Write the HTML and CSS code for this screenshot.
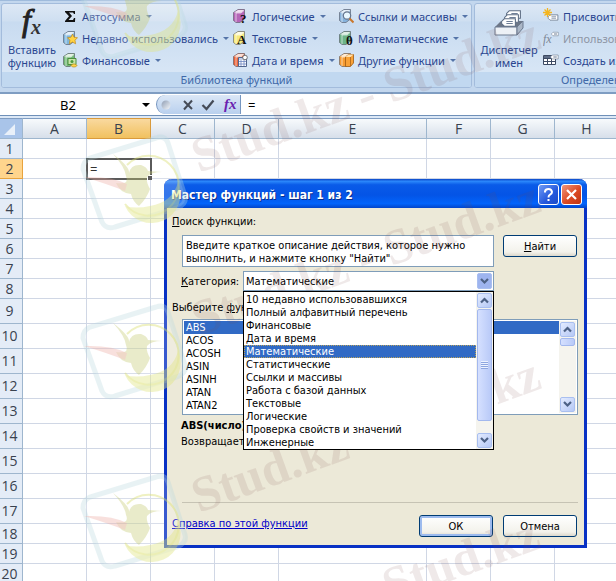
FILE: index.html
```
<!DOCTYPE html>
<html lang="ru">
<head>
<meta charset="utf-8">
<title>Мастер функций</title>
<link rel="stylesheet" href="styles.css">
</head>
<body>
<svg class="defs" aria-hidden="true">
  <defs>
    <linearGradient id="ball" x1="0" y1="0" x2="1" y2="1"><stop offset="0" stop-color="#8f9db3"/><stop offset="1" stop-color="#f4f7fb"/></linearGradient>
    <symbol id="book" viewBox="0 0 16 16">
      <path d="M1.5 4.5 6 1.5h6.5v9.500L8 14.500H4L1.500 12.500z" fill="currentColor" stroke="#4a4a55" stroke-opacity=".55"/>
      <path d="M2 4.500 6 2h6L9 4.700H4z" fill="#fff" fill-opacity=".8"/>
      <path d="M4 5v9M4 5h5l3-2.500" fill="none" stroke="#fff" stroke-opacity=".6"/>
    </symbol>
    <symbol id="tag" viewBox="0 0 16 10"><path d="M4 1.500h10.500v7H4L1.500 6V4z" fill="#fff" stroke="#5f6f85"/><path d="M6 4h6M6 6h6" stroke="#6f7f97"/></symbol>
    <symbol id="bird" viewBox="0 0 110 98">
      <path d="M10 24Q3 27 3 35L22 88Q26 96 35 93L97 74Q107 70 105 62L88 9Q85 1 76 4Z" fill="#fff" fill-opacity=".3" stroke="#b9d9df" stroke-opacity=".5" stroke-width="5"/>
      <path d="M47 31A30 30 0 1 1 45 70" fill="none" stroke="#dfe383" stroke-opacity=".75" stroke-width="2"/>
      <path d="M45 72A29 29 0 0 0 98 48Q93 68 70 72Q56 75 45 72Z" fill="#e2e785" fill-opacity=".65"/>
      <path d="M33 20Q50 33 49 39Q51 30 61 31Q67 33 68 37L82 38Q71 38 67 43Q66 48 70 55Q67 64 59 72Q53 68 51 60Q40 59 36 49Q50 51 46 42Q45 33 33 20Z" fill="#ccd184" fill-opacity=".65"/>
      <path d="M4 43Q32 42 47 50L45 57Q27 50 4 43Z" fill="#eeb1aa" fill-opacity=".6"/>
    </symbol>
  </defs>
</svg>

<main class="app">
<header class="ribbon">
  <section class="group group-lib">
    <div class="group-body">
      <button class="big"><svg width="32" height="32" viewBox="0 0 32 32"><text x="6" y="23" class="fx-big">f</text><text x="15" y="26" class="fx-big-x">x</text></svg><span>Вставить<br>функцию</span></button>
      <div class="stack stack-a">
        <button class="cmd"><svg class="ic" viewBox="0 0 16 16"><path d="M3 3h10v3h-1L11 4.500H7L10 8l-3.500 4H11l1-2h1.200L13 14H3v-1l4-4.700L3 4z" fill="#111"/></svg>Автосумма<i class="arr"></i></button>
        <button class="cmd"><svg class="ic c-blue" viewBox="0 0 16 16"><use href="#book"/><path d="m10.500 4 1.500 3.200 3.500.5-2.500 2.500.6 3.600-3.100-1.700-3.200 1.700.6-3.600L5.500 7.700 9 7.200z" fill="#ffd344" stroke="#c48a1a" stroke-width=".7"/></svg>Недавно использовались<i class="arr"></i></button>
        <button class="cmd"><svg class="ic c-green" viewBox="0 0 16 16"><use href="#book"/><path d="M6 6.500h8v6H6z" fill="#c7e5a9" stroke="#4b8f3e"/><circle cx="10" cy="9.500" r="1.500" fill="#4b9a3c"/><path d="M9 13.500c1-2 5-2 6 0-1 2-5 2-6 0z" fill="#ffd34c" stroke="#a98518" stroke-width=".6"/></svg>Финансовые<i class="arr"></i></button>
      </div>
      <div class="stack stack-b">
        <button class="cmd"><svg class="ic c-purple" viewBox="0 0 16 16"><use href="#book"/><text x="8" y="15" class="glyph">?</text></svg>Логические<i class="arr"></i></button>
        <button class="cmd"><svg class="ic c-yellow" viewBox="0 0 16 16"><use href="#book"/><text x="5" y="14" class="glyph">A</text></svg>Текстовые<i class="arr"></i></button>
        <button class="cmd"><svg class="ic c-red" viewBox="0 0 16 16"><use href="#book"/><path d="M6.500 5.500h8v9h-8z" fill="#fff" stroke="#50658f"/><path d="M7 7h7M7 9.500h7M7 12h7M9 8v6M12 8v6" stroke="#6d86c2" stroke-width=".8"/><circle cx="13" cy="5.500" r="2.300" fill="#fff" stroke="#555" stroke-width=".8"/></svg>Дата и время<i class="arr"></i></button>
      </div>
      <div class="stack">
        <button class="cmd"><svg class="ic c-sky" viewBox="0 0 16 16"><use href="#book"/><circle cx="9" cy="7.500" r="3.700" fill="#e8f7ff" stroke="#65758d" stroke-width="1.200"/><path d="m11.500 10.500 4 4" stroke="#c9772c" stroke-width="2"/></svg>Ссылки и массивы<i class="arr"></i></button>
        <button class="cmd"><svg class="ic c-teal" viewBox="0 0 16 16"><use href="#book"/><text x="8" y="15" class="glyph">θ</text></svg>Математические<i class="arr"></i></button>
        <button class="cmd"><svg class="ic c-orange" viewBox="0 0 16 16"><use href="#book"/><path d="m7.500 5 3-2.500h5v8.500l-3 3.500h-5z" fill="#f9a238" stroke="#9e5a12" stroke-width=".8"/><path d="m7.500 5 3-2.500h5L12.500 5z" fill="#ffe1ae"/><path d="M12.500 5v9" stroke="#a35a12" stroke-width=".7"/></svg>Другие функции<i class="arr"></i></button>
      </div>
    </div>
    <div class="group-name">Библиотека функций</div>
  </section>
  <section class="group group-names">
    <div class="group-body">
      <button class="big"><svg width="32" height="32" viewBox="0 0 32 32"><path d="M2 19 8 13h22l-6 6z" fill="#6d7787"/><path d="M2 19h22v8H2z" fill="#edf1f6" stroke="#6d7b90"/><path d="m24 19 6-6v7l-6 7z" fill="#aab6c6" stroke="#6d7b90"/><use href="#tag" x="12" y="1" width="17" height="11"/><use href="#tag" x="10" y="5" width="17" height="11"/><use href="#tag" x="7" y="9" width="17" height="11"/></svg><span>Диспетчер<br>имен</span></button>
      <div class="stack">
        <button class="cmd"><svg class="ic" viewBox="0 0 16 16"><use href="#tag" x="4" y="5" width="12" height="9"/><path d="M4.500 0v9M0 4.500h9M1.500 1.500l6 6M7.500 1.500l-6 6" stroke="#f4b51e" stroke-width="1.300"/></svg>Присвоить имя</button>
        <button class="cmd off"><svg class="ic" viewBox="0 0 16 16"><text x="0" y="13" class="fx-small">fx</text><use href="#tag" x="8" y="1" width="8" height="6"/></svg>Использовать в формуле</button>
        <button class="cmd"><svg class="ic" viewBox="0 0 16 16"><path d="M.5 3.500h12v9H.5zM.5 6.500h12M.5 9.500h12M4.500 3.500v9M8.500 3.500v9" fill="#fff" stroke="#3c4a63"/><path d="M1 4h11v2H1z" fill="#5d6c86"/><use href="#tag" x="7" y="1" width="9" height="8"/></svg>Создать из выделенного</button>
      </div>
    </div>
    <div class="group-name">Определенные имена</div>
  </section>
</header>

<div class="formula-bar">
  <div class="name-box"><input aria-label="Имя ячейки" value="B2"><i class="black-arr"></i></div>
  <div class="fx-tools">
    <svg width="18" height="18" viewBox="0 0 18 18"><circle cx="9" cy="9" r="4.500" fill="url(#ball)"/></svg>
    <button aria-label="Отмена ввода"><svg width="12" height="12" viewBox="0 0 12 12"><path d="m2 2 8 8M10 1.500 2 10.500" stroke="#454b57" stroke-width="2"/></svg></button>
    <button aria-label="Ввод"><svg width="14" height="12" viewBox="0 0 14 12"><path d="m1.500 6 4 4 7-8.500" fill="none" stroke="#454b57" stroke-width="2.200"/></svg></button>
    <button aria-label="Вставить функцию"><svg width="16" height="18" viewBox="0 0 16 18"><text x="2" y="13" class="fx-violet">fx</text></svg></button>
  </div>
  <input class="formula" aria-label="Строка формул" value="=">
</div>

<table class="sheet">
  <colgroup><col class="c-num"><col class="c-std"><col class="c-std"><col class="c-std"><col class="c-std"><col class="c-wide"><col class="c-std"><col class="c-std"><col class="c-std"></colgroup>
  <thead><tr><th class="corner"><svg width="11" height="11" viewBox="0 0 11 11"><path d="M11 0v11H0z" fill="#e9f0f9"/></svg></th><th>A</th><th class="hot">B</th><th>C</th><th>D</th><th>E</th><th>F</th><th>G</th><th>H</th></tr></thead>
  <tbody>
    <tr><th>1</th><td></td><td></td><td></td><td></td><td></td><td></td><td></td><td></td></tr>
    <tr><th class="hot">2</th><td></td><td class="active">=<i class="handle"></i></td><td></td><td></td><td></td><td></td><td></td><td></td></tr>
    <tr><th>3</th><td></td><td></td><td></td><td></td><td></td><td></td><td></td><td></td></tr>
    <tr><th>4</th><td></td><td></td><td></td><td></td><td></td><td></td><td></td><td></td></tr>
    <tr><th>5</th><td></td><td></td><td></td><td></td><td></td><td></td><td></td><td></td></tr>
    <tr><th>6</th><td></td><td></td><td></td><td></td><td></td><td></td><td></td><td></td></tr>
    <tr><th>7</th><td></td><td></td><td></td><td></td><td></td><td></td><td></td><td></td></tr>
    <tr><th>8</th><td></td><td></td><td></td><td></td><td></td><td></td><td></td><td></td></tr>
    <tr class="tall"><th>9</th><td></td><td></td><td></td><td></td><td></td><td></td><td></td><td></td></tr>
    <tr class="tall"><th>10</th><td></td><td></td><td></td><td></td><td></td><td></td><td></td><td></td></tr>
    <tr class="tall"><th>11</th><td></td><td></td><td></td><td></td><td></td><td></td><td></td><td></td></tr>
    <tr class="tall"><th>12</th><td></td><td></td><td></td><td></td><td></td><td></td><td></td><td></td></tr>
    <tr class="tall"><th>13</th><td></td><td></td><td></td><td></td><td></td><td></td><td></td><td></td></tr>
    <tr class="tall"><th>14</th><td></td><td></td><td></td><td></td><td></td><td></td><td></td><td></td></tr>
    <tr class="tall"><th>15</th><td></td><td></td><td></td><td></td><td></td><td></td><td></td><td></td></tr>
    <tr class="tall"><th>16</th><td></td><td></td><td></td><td></td><td></td><td></td><td></td><td></td></tr>
    <tr class="tall"><th>17</th><td></td><td></td><td></td><td></td><td></td><td></td><td></td><td></td></tr>
    <tr><th>18</th><td></td><td></td><td></td><td></td><td></td><td></td><td></td><td></td></tr>
    <tr><th>19</th><td></td><td></td><td></td><td></td><td></td><td></td><td></td><td></td></tr>
    <tr><th>20</th><td></td><td></td><td></td><td></td><td></td><td></td><td></td><td></td></tr>
  </tbody>
</table>
</main>

<div class="dialog" role="dialog" aria-labelledby="dlg-title">
  <div class="title-bar">
    <h1 id="dlg-title">Мастер функций - шаг 1 из 2</h1>
    <button class="cap help" aria-label="Справка"><svg width="19" height="19" viewBox="0 0 19 19"><path d="M6 7.500V6.500Q6.500 4 9.500 4T13 7Q13 8.500 11 9.700 9.500 10.500 9.500 12.500M9.500 14v2" fill="none" stroke="#fff" stroke-width="2"/></svg></button>
    <button class="cap close" aria-label="Закрыть"><svg width="19" height="19" viewBox="0 0 19 19"><path d="m5 5 9 9M14 5l-9 9" stroke="#fff" stroke-width="2.200"/></svg></button>
  </div>
  <form class="dialog-body">
    <label class="lead" for="query"><u>П</u>оиск функции:</label>
    <div class="search-row">
      <textarea id="query">Введите краткое описание действия, которое нужно выполнить, и нажмите кнопку "Найти"</textarea>
      <button type="button" class="btn"><u>Н</u>айти</button>
    </div>
    <div class="category-row">
      <label for="cat"><u>К</u>атегория:</label>
      <div class="combo">
        <select id="cat"><option>Математические</option></select>
        <span class="combo-btn"><svg width="9" height="7" viewBox="0 0 9 7"><path d="m1 1 3.500 3.500L8 1" class="chev"/></svg></span>
        <div class="popup">
          <ul role="listbox" aria-label="Категории">
            <li role="option">10 недавно использовавшихся</li>
            <li role="option">Полный алфавитный перечень</li>
            <li role="option">Финансовые</li>
            <li role="option">Дата и время</li>
            <li role="option" aria-selected="true">Математические</li>
            <li role="option">Статистические</li>
            <li role="option">Ссылки и массивы</li>
            <li role="option">Работа с базой данных</li>
            <li role="option">Текстовые</li>
            <li role="option">Логические</li>
            <li role="option">Проверка свойств и значений</li>
            <li role="option">Инженерные</li>
          </ul>
          <div class="scroll">
            <span class="sbtn"><svg width="9" height="7" viewBox="0 0 9 7"><path d="M1 5.500 4.500 2 8 5.500" class="chev"/></svg></span>
            <span class="thumb thumb-long"><i class="grip"></i></span>
            <span class="track"></span>
            <span class="sbtn"><svg width="9" height="7" viewBox="0 0 9 7"><path d="m1 1 3.500 3.500L8 1" class="chev"/></svg></span>
          </div>
        </div>
      </div>
    </div>
    <label class="lead" for="fn">Выберите <u>ф</u>ункцию:</label>
    <div class="fn-list">
      <select id="fn" size="7">
        <option selected>ABS</option><option>ACOS</option><option>ACOSH</option><option>ASIN</option><option>ASINH</option><option>ATAN</option><option>ATAN2</option>
      </select>
      <div class="scroll">
        <span class="sbtn"><svg width="9" height="7" viewBox="0 0 9 7"><path d="M1 5.500 4.500 2 8 5.500" class="chev"/></svg></span>
        <span class="thumb thumb-short"></span>
        <span class="track"></span>
        <span class="sbtn"><svg width="9" height="7" viewBox="0 0 9 7"><path d="m1 1 3.500 3.500L8 1" class="chev"/></svg></span>
      </div>
    </div>
    <div class="about"><strong>ABS(число)</strong><p>Возвращает</p></div>
    <hr>
    <div class="actions">
      <a href="#">Справка по этой функции</a>
      <button type="button" class="btn primary">ОК</button>
      <button type="button" class="btn">Отмена</button>
    </div>
  </form>
</div>

<svg class="watermark" aria-hidden="true">
  <g class="birds">
    <use href="#bird" x="80" y="-37" width="110" height="98"/>
    <use href="#bird" x="80" y="134" width="110" height="98"/>
    <use href="#bird" x="80" y="303" width="110" height="98"/>
    <use href="#bird" x="80" y="473" width="110" height="98"/>
  </g>
  <g class="wm">
    <text transform="translate(199 173) rotate(-20)">Stud.kz - Stud.kz</text>
    <text transform="translate(199 336) rotate(-20)">Stud.kz - Stud.kz</text>
    <text transform="translate(199 513) rotate(-20)">Stud.kz - Stud.kz</text>
    <text transform="translate(390 603) rotate(-20)">Stud.kz</text>
  </g>
</svg>
</body>
</html>
```
FILE: styles.css
```
* { box-sizing: border-box; }
body {
  margin: 0;
  height: 100vh;
  overflow: hidden;
  position: relative;
  background: #fff;
  color: #000;
  font: 11px/13px "DejaVu Sans Condensed", "Noto Sans", sans-serif;
}
button, input, select, textarea { font: inherit; color: inherit; margin: 0; padding: 0; border: 0; background: none; border-radius: 0; outline: 0; appearance: none; }
.defs { position: absolute; width: 0; height: 0; }
.app { height: 100%; overflow: hidden; }

/* Ribbon */
.ribbon {
  display: flex;
  gap: 2px;
  padding: 2px 0 4px 1px;
  background: #c3d7ee;
  border-top: 1px solid #9fbbdc;
  overflow: hidden;
  font: 11px/13px "Noto Sans", sans-serif;
  color: #2a4690;
}
.group { flex: none; border: 1px solid #a3bcdc; border-radius: 3px; background: linear-gradient(#dde8f5, #cfdff1 20%, #c8dbf0 22%, #dce9f7); overflow: hidden; }
.group-lib { width: 471px; }
.group-names { flex: 1 0 320px; }
.group-body { display: flex; height: 68px; }
.group-body > * { flex: none; }
.group-name { height: 15px; line-height: 15px; text-align: center; background: #c1d8f0; color: #4068a8; }
.group-names .group-name { padding-left: 86px; text-align: left; }
.big { width: 60px; display: flex; flex-direction: column; align-items: center; padding-top: 4px; gap: 3px; }
.group-names .big { width: 68px; }
.stack { display: flex; flex-direction: column; padding-top: 1px; }
.stack-a { width: 170px; }
.stack-b { width: 106px; }
.cmd { height: 22px; display: flex; align-items: center; white-space: nowrap; }
.ic { width: 16px; height: 16px; margin-right: 4px; flex: none; }
.arr { margin-left: 5px; border: 3px solid transparent; border-top-color: #5574a8; border-bottom: 0; }
.off { color: #8e96a5; }
.c-blue { color: #7fb6dd; } .c-green { color: #72b877; } .c-purple { color: #b565b8; } .c-yellow { color: #f6ea7c; }
.c-red { color: #e9633a; } .c-sky { color: #86b2dc; } .c-teal { color: #6cb488; } .c-orange { color: #f79b31; }
.glyph { font: bold 13px "Liberation Serif", serif; fill: #111; }
.fx-big { font: italic 32px "Liberation Serif", serif; fill: #222; stroke: #222; }
.fx-big-x { font: italic bold 20px "Liberation Serif", serif; fill: #333; }
.fx-small { font: italic 12px "Liberation Serif", serif; fill: #7d8795; }
.fx-violet { font: italic bold 15px "Liberation Serif", serif; fill: #6a1fb0; }

/* Formula bar */
.formula-bar { display: flex; height: 26px; padding: 1px 0 4px; border-top: 2px solid #7f9dc2; background: linear-gradient(#fff 21px, #6f90b8 21px, #6f90b8 22px, #dce8f6 22px); font: 13px/20px "Noto Sans", sans-serif; }
.name-box { width: 156px; display: flex; align-items: center; }
.name-box input { width: 136px; text-align: center; }
.black-arr { margin-left: 6px; border: 4px solid transparent; border-top-color: #000; border-bottom: 0; }
.fx-tools { width: 85px; display: flex; align-items: center; gap: 7px; border: 1px solid #7696c0; border-width: 0 1px; border-radius: 12px 0 0 12px; background: linear-gradient(#dbe7f6, #b9d0ee); }
.fx-tools button, .fx-tools svg { display: block; }
.formula { flex: 1; padding-left: 7px; min-width: 0; }

/* Sheet */
.sheet { width: 100%; min-width: 619px; border-collapse: separate; border-spacing: 0; table-layout: fixed; font: 14px/18px "Open Sans", sans-serif; }
.c-num { width: 23px; } .c-std { width: 64px; } .c-wide { width: 148px; } .c-std:last-child { width: auto; }
.sheet th, .sheet td { height: 20px; padding: 0; border: solid #d0d7e5; border-width: 0 1px 1px 0; font-weight: 400; }
.sheet .tall th, .sheet .tall td { height: 25px; }
.sheet th { border-color: #9eb6ce; background: #e4ecf7; color: #39424f; text-align: center; vertical-align: middle; }
.sheet thead th { height: 21px; border-top: 1px solid #7f9dc2; background: linear-gradient(#f7fafc, #d7dfea); }
.sheet tbody th { padding-right: 3px; }
.sheet thead .corner { background: #a9c4e9; text-align: right; vertical-align: bottom; padding: 0 4px 3px; }
.corner svg { display: block; }
.sheet thead .hot { background: linear-gradient(#f9d99f, #f1c15f); border-color: #d99a3c; }
.sheet tbody .hot { background: #ffd58d; border-color: #e8a33d; }
.sheet .active { position: relative; padding-left: 3px; outline: 2px solid #333; outline-offset: -1px; font-size: 13px; }
.handle { position: absolute; right: -2px; bottom: -2px; width: 5px; height: 5px; background: #333; border: solid #fff; border-width: 1px 0 0 1px; }

/* Dialog window */
.dialog { position: absolute; left: 164px; top: 179px; width: 423px; border: 3px solid #0831c4; border-top: 0; border-radius: 8px 8px 0 0; background: #ece9d8; }
.title-bar { display: flex; align-items: center; gap: 2px; height: 29px; margin: 0 -3px; padding: 2px 5px 0 7px; border-radius: 8px 8px 0 0; background: linear-gradient(#0a45c6, #2b87fb 8%, #0a5be8 20%, #0454e6 55%, #0264fb 85%, #0345c9); }
.title-bar h1 { flex: 1; margin: 0; font: bold 12px/18px "DejaVu Sans Condensed", sans-serif; color: #fff; text-shadow: 1px 1px #0a2e8c; }
.cap { width: 21px; height: 21px; border: 1px solid #fff; border-radius: 3px; }
.cap svg { display: block; }
.help { background: linear-gradient(135deg, #6f9bf5, #2458dc 60%, #1c4cc8); }
.close { background: linear-gradient(135deg, #f0967c, #dc4a23 55%, #bf3412); }
.dialog-body { padding: 7px 6px 8px 5px; }
.lead { display: block; height: 14px; }
.search-row { display: flex; gap: 9px; margin: 6px 0 4px 10px; padding-right: 1px; align-items: flex-start; }
textarea { flex: 1; height: 32px; padding: 3px; resize: none; overflow: hidden; border: 1px solid #7f9db9; background: #fff; }
.btn { width: 74px; height: 22px; border: 1px solid #003c74; border-radius: 3px; background: linear-gradient(#fff, #f3f2eb 80%, #dcd8cb); }
.primary { box-shadow: inset 0 0 0 2px #9dbbee; }
.category-row { display: flex; align-items: center; margin: 0 84px 10px 9px; height: 20px; }
.category-row label { width: 62px; }
.combo { flex: 1; position: relative; height: 20px; }
.combo select { width: 100%; height: 20px; padding-left: 2px; border: 1px solid #7f9db9; background: #fff; }
.combo-btn, .sbtn { display: flex; align-items: center; justify-content: center; border: 1px solid #a9bff0; border-radius: 2px; background: linear-gradient(135deg, #e3ebff, #b5c8f5); }
.combo-btn { position: absolute; right: 2px; top: 2px; width: 15px; height: 16px; background: #9eb4ef; pointer-events: none; }
.chev { fill: none; stroke: #4d6185; stroke-width: 2.200; }
.popup { position: absolute; z-index: 2; left: 0; top: 20px; width: 100%; display: flex; border: 1px solid #000; background: #fff; }
.popup ul { flex: 1; margin: 0; padding: 1px 0 0; list-style: none; }
.popup li { height: 13px; padding-left: 2px; white-space: nowrap; }
.popup [aria-selected] { background: #316ac5; color: #fff; outline: 1px dotted #b9a25b; outline-offset: -1px; }
.scroll { width: 17px; display: flex; flex-direction: column; padding: 1px; background: #f5f4ee; }
.sbtn { height: 15px; flex: none; }
.thumb { margin: 1px 0; border: 1px solid #a3b8ee; border-radius: 2px; background: linear-gradient(90deg, #d5e0ff, #b9caf8); display: flex; align-items: center; justify-content: center; }
.thumb-long { height: 112px; }
.thumb-short { height: 8px; }
.track { flex: 1; }
.grip { width: 7px; height: 8px; background: repeating-linear-gradient(#eef3ff 0 1px, #8ea6e0 1px 2px); }
.fn-list { display: flex; margin: 4px 0 4px 10px; border: 1px solid #7f9db9; background: #fff; padding: 1px; }
.fn-list select { flex: 1; height: 92px; overflow: hidden; scrollbar-width: none; }
.fn-list option { height: 13px; min-height: 13px; padding: 0 0 0 2px; line-height: 13px; }
.fn-list option:checked { background: #316ac5 linear-gradient(#316ac5, #316ac5); color: #fff; }
.about { height: 83px; margin-left: 9px; }
.about strong { display: block; height: 16px; }
.about p { margin: 0; }
hr { margin: 0 0 0 10px; height: 1px; border: 0; background: #c6c3b4; }
.actions { display: flex; gap: 10px; margin-top: 12px; padding-right: 1px; }
.actions a { flex: 1; line-height: 18px; color: #0000c8; }

.watermark { position: absolute; inset: 0; width: 100%; height: 100%; pointer-events: none; }
.birds { opacity: .65; }
.wm { font: bold 50px "Liberation Serif", serif; fill: #7a4848; fill-opacity: .12; }
```
